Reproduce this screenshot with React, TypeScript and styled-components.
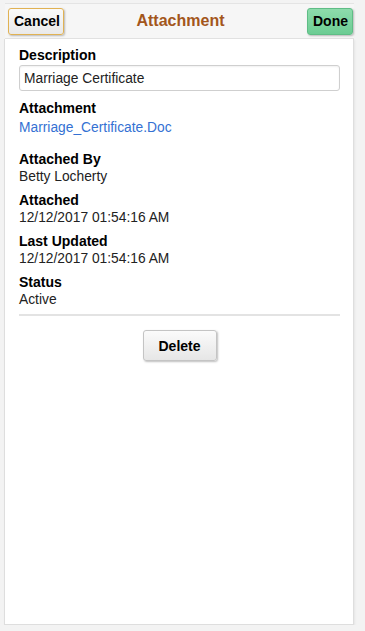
import React from "react";
import styled, { createGlobalStyle } from "styled-components";

const GlobalStyle = createGlobalStyle`
  html, body {
    margin: 0;
    padding: 0;
    background: #f3f3f3;
    font-family: "Liberation Sans", Arial, sans-serif;
  }
`;

const fields = [
  { label: "Attached By", value: "Betty Locherty" },
  { label: "Attached", value: "12/12/2017 01:54:16 AM" },
  { label: "Last Updated", value: "12/12/2017 01:54:16 AM" },
  { label: "Status", value: "Active" },
];

const App = () => {
  return (
    <>
      <GlobalStyle />
      <Page>
        <Header>
          <HeaderButton variant="cancel">Cancel</HeaderButton>
          <Title>Attachment</Title>
          <HeaderButton variant="done">Done</HeaderButton>
        </Header>
        <Panel>
          <Label>Description</Label>
          <TextInput defaultValue="Marriage Certificate" />
          <Label>Attachment</Label>
          <FileLink href="#">Marriage_Certificate.Doc</FileLink>
          {fields.map((item) => (
            <Field key={item.label}>
              <Label>{item.label}</Label>
              <Value>{item.value}</Value>
            </Field>
          ))}
          <Divider />
          <ButtonRow>
            <DeleteButton>Delete</DeleteButton>
          </ButtonRow>
        </Panel>
      </Page>
    </>
  );
};

const Page = styled.div`
  display: flex;
  flex-direction: column;
  width: 350px;
  height: 625px;
  margin-left: 4px;
  padding-top: 3px;
  box-sizing: border-box;
`;

const Header = styled.div`
  display: grid;
  grid-template-columns: 1fr auto 1fr;
  align-items: center;
  height: 36px;
  padding: 0 1px 0 3px;
  background: #f6f6f6;
  border-top: 1px solid #e4e4e4;
  border-bottom: 1px solid #e2e2e2;
  box-sizing: border-box;
  margin-left: 1px;

  > button:last-child {
    justify-self: end;
  }
`;

const HeaderButton = styled.button<{ variant: "cancel" | "done" }>`
  height: 27px;
  padding: 0 5px;
  font-family: "Liberation Sans", Arial, sans-serif;
  font-size: 14px;
  font-weight: bold;
  color: #000;
  border-radius: 3px;
  cursor: pointer;
  border: 1px solid
    ${({ variant }) => (variant === "cancel" ? "#e1b253" : "#5fbd86")};
  background: ${({ variant }) =>
    variant === "cancel"
      ? "linear-gradient(#fafafa, #e9e9e9)"
      : "linear-gradient(#8ddcac, #6ccc93)"};
  box-shadow: 1px 1px 2px rgba(0, 0, 0, 0.25);
  width: ${({ variant }) => (variant === "cancel" ? "56px" : "46px")};
`;

const Title = styled.h1`
  margin: 0;
  font-size: 16px;
  font-weight: bold;
  color: #a3561c;
`;

const Panel = styled.div`
  flex: 1;
  display: flex;
  flex-direction: column;
  background: #fff;
  border: 1px solid #dedede;
  border-top: none;
  padding: 8px 13px 0 14px;
  box-shadow: 1px 1px 2px rgba(0, 0, 0, 0.06);
`;

const Label = styled.div`
  font-size: 14px;
  font-weight: bold;
  line-height: 17px;
  color: #000;
`;

const TextInput = styled.input`
  height: 26px;
  margin: 1px 0 9px;
  padding: 0 4px;
  box-sizing: border-box;
  width: 100%;
  border: 1px solid #cfcfcf;
  border-radius: 3px;
  font-family: "Liberation Sans", Arial, sans-serif;
  font-size: 13.8px;
  color: #222;
  box-shadow: inset 0 1px 2px rgba(0, 0, 0, 0.06);
`;

const FileLink = styled.a`
  font-size: 13.8px;
  line-height: 20px;
  margin-top: 1px;
  color: #3471d3;
  text-decoration: none;
`;

const Field = styled.div`
  display: flex;
  flex-direction: column;
  margin-top: 13px;

  & + & {
    margin-top: 7px;
  }
`;

const Value = styled.div`
  font-size: 13.8px;
  line-height: 17px;
  color: #222;
`;

const Divider = styled.hr`
  margin: 6px 0 0;
  border: none;
  border-top: 2px solid #e3e3e3;
  width: 100%;
`;

const ButtonRow = styled.div`
  display: flex;
  justify-content: center;
  padding-top: 14px;
`;

const DeleteButton = styled.button`
  width: 74px;
  height: 31px;
  font-family: "Liberation Sans", Arial, sans-serif;
  font-size: 14px;
  font-weight: bold;
  color: #000;
  border: 1px solid #c4c4c4;
  border-radius: 3px;
  background: linear-gradient(#fbfbfb, #e6e6e6);
  box-shadow: 1px 1px 2px rgba(0, 0, 0, 0.25);
  cursor: pointer;
`;

export default App;
